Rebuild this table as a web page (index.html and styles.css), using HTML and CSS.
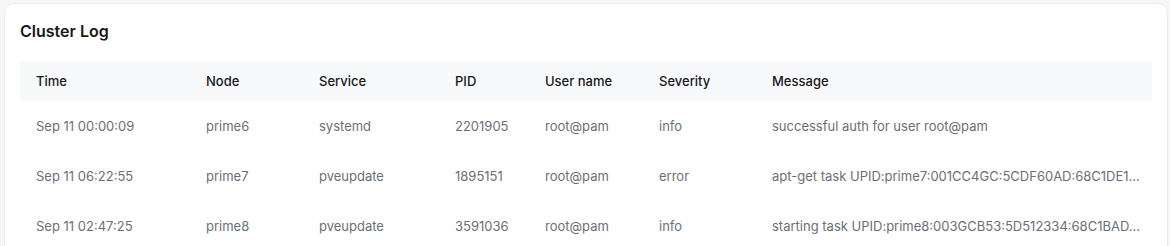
FILE: index.html
```html
<!DOCTYPE html>
<html lang="en">
<head>
    <meta charset="UTF-8">
    <title>Cluster Log</title>
    <link rel="stylesheet" href="styles.css">
</head>
<body>
    <section class="panel">
        <h2 class="panel-title">Cluster Log</h2>
        <table class="log-table">
            <colgroup>
                <col class="col-time">
                <col class="col-node">
                <col class="col-service">
                <col class="col-pid">
                <col class="col-user">
                <col class="col-severity">
                <col class="col-message">
            </colgroup>
            <thead>
                <tr>
                    <th>Time</th>
                    <th>Node</th>
                    <th>Service</th>
                    <th>PID</th>
                    <th>User name</th>
                    <th>Severity</th>
                    <th>Message</th>
                </tr>
            </thead>
            <tbody>
                <tr>
                    <td>Sep 11 00:00:09</td>
                    <td>prime6</td>
                    <td>systemd</td>
                    <td>2201905</td>
                    <td>root@pam</td>
                    <td>info</td>
                    <td class="message">successful auth for user root@pam</td>
                </tr>
                <tr>
                    <td>Sep 11 06:22:55</td>
                    <td>prime7</td>
                    <td>pveupdate</td>
                    <td>1895151</td>
                    <td>root@pam</td>
                    <td>error</td>
                    <td class="message">apt-get task UPID:prime7:001CC4GC:5CDF60AD:68C1DE1...</td>
                </tr>
                <tr>
                    <td>Sep 11 02:47:25</td>
                    <td>prime8</td>
                    <td>pveupdate</td>
                    <td>3591036</td>
                    <td>root@pam</td>
                    <td>info</td>
                    <td class="message">starting task UPID:prime8:003GCB53:5D512334:68C1BAD...</td>
                </tr>
            </tbody>
        </table>
    </section>
</body>
</html>
```

FILE: styles.css
```css
* {
    box-sizing: border-box;
    margin: 0;
    padding: 0;
}

body {
    font-family: Inter, 'Liberation Sans', sans-serif;
    background: #f6f6f7;
    padding: 3px 2px 0 4px;
    height: 246px;
    overflow: hidden;
}

.panel {
    background: #ffffff;
    border: 1px solid #ececee;
    border-radius: 10px;
    padding: 15px 15px 20px;
    min-height: 300px;
}

.panel-title {
    font-size: 16px;
    font-weight: 600;
    line-height: 24px;
    color: #18181b;
    margin-bottom: 18px;
}

.log-table {
    width: 100%;
    table-layout: fixed;
    border-collapse: collapse;
    font-size: 13px;
}

.col-time { width: 170px; }
.col-node { width: 113px; }
.col-service { width: 136px; }
.col-pid { width: 90px; }
.col-user { width: 114px; }
.col-severity { width: 113px; }

.log-table thead tr {
    background: #f8f9fb;
}

.log-table th {
    height: 40px;
    padding: 0 16px;
    text-align: left;
    font-weight: 500;
    color: #18181b;
}

.log-table td {
    height: 50px;
    padding: 0 16px;
    color: #6b6f76;
    white-space: nowrap;
}

.log-table td.message {
    padding-right: 8px;
}
```
